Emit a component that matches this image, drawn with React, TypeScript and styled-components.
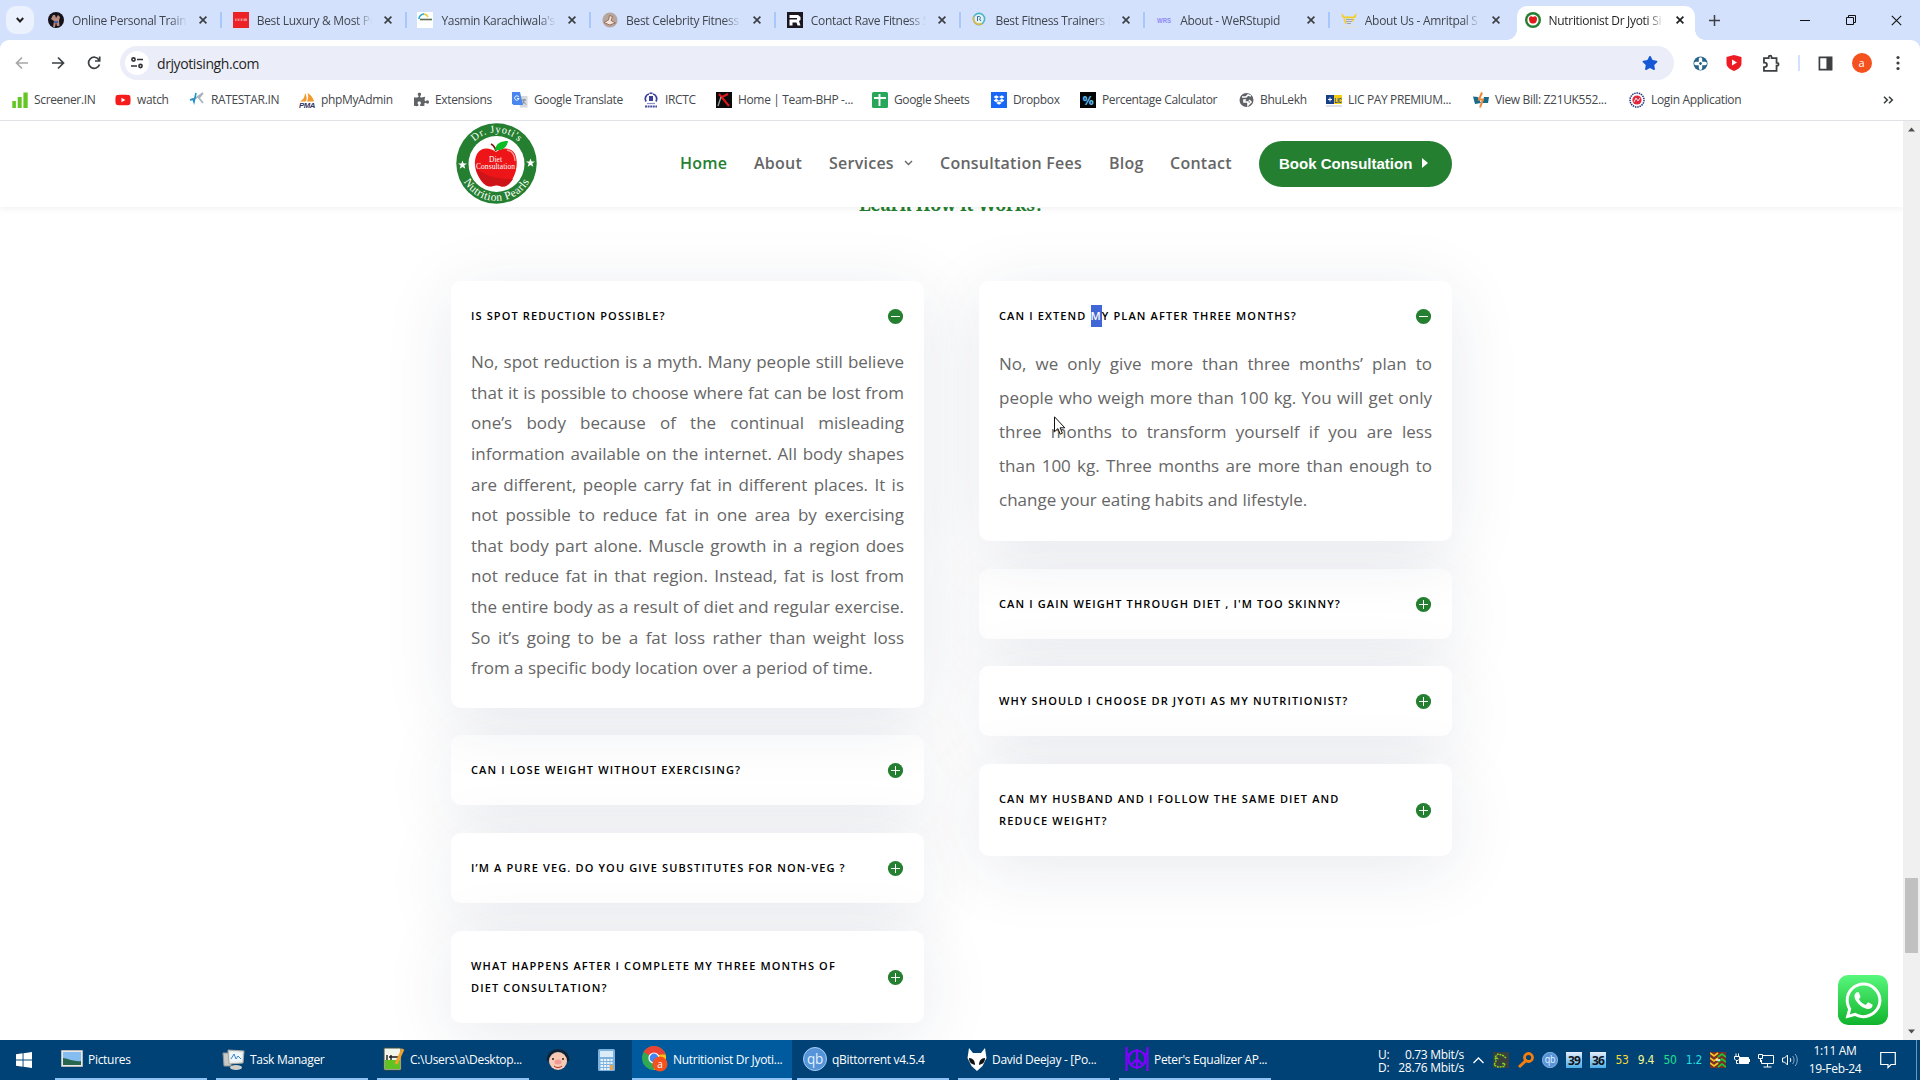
import React from "react";
import styled, { createGlobalStyle, css } from "styled-components";
import { FaWhatsapp, FaPuzzlePiece, FaStar, FaYoutube, FaDropbox } from "react-icons/fa";

const GREEN = "#257f30";
const UI = `"Segoe UI", "Open Sans", "Noto Sans", sans-serif`;

const Global = createGlobalStyle`
  * { box-sizing: border-box; }
  html, body { margin: 0; padding: 0; overflow: hidden; background: #fff; }
  svg { display: block; flex: none; }
`;

const Screen = styled.div`
  width: 1920px;
  height: 1080px;
  display: flex;
  flex-direction: column;
  overflow: hidden;
  font-family: ${UI};
`;

/* ---------- tab strip ---------- */
const TabStrip = styled.div`
  height: 40px;
  flex: none;
  display: flex;
  align-items: center;
  background: #d3e1fd;
  padding-left: 6px;
`;
const TabSearch = styled.div`
  width: 28px;
  height: 28px;
  border-radius: 10px;
  background: #ebf2fe;
  display: flex;
  align-items: center;
  justify-content: center;
  margin-right: 3px;
`;
const Tab = styled.div<{ $active?: boolean }>`
  width: ${(p) => (p.$active ? 178 : 184.7)}px;
  height: ${(p) => (p.$active ? 34 : 28)}px;
  align-self: ${(p) => (p.$active ? "flex-end" : "center")};
  display: flex;
  align-items: center;
  flex: none;
  color: ${(p) => (p.$active ? "#1f1f1f" : "#41464c")};
  ${(p) =>
    p.$active
      ? css`
          position: relative;
          margin-left: 2px;
          background: #fff;
          border-radius: 10px 10px 0 0;
          padding: 0 9px 6px 8px;
          &::before,
          &::after {
            content: "";
            position: absolute;
            bottom: 0;
            width: 10px;
            height: 10px;
          }
          &::before {
            left: -10px;
            background: radial-gradient(circle at 0 0, transparent 9.5px, #fff 10px);
          }
          &::after {
            right: -10px;
            background: radial-gradient(circle at 100% 0, transparent 9.5px, #fff 10px);
          }
        `
      : css`
          padding: 0 0 0 11px;
        `}
`;
const TabTitle = styled.span`
  width: 115px;
  flex: none;
  margin: 2px 12px 0 8px;
  font-size: 12px;
  line-height: 16px;
  letter-spacing: -0.3px;
  white-space: nowrap;
  overflow: hidden;
  -webkit-mask-image: linear-gradient(90deg, #000 98px, transparent 115px);
  mask-image: linear-gradient(90deg, #000 98px, transparent 115px);
`;
const TabSep = styled.span`
  width: 2px;
  flex: none;
  height: 16px;
  background: #a8c7fa;
  margin-left: 13px;
`;
const NewTab = styled.div`
  margin-left: 14px;
  flex: 1;
`;
const WinButtons = styled.div`
  display: flex;
  align-items: center;
  gap: 34px;
  padding-right: 18px;
`;
const ToolbarWrap = styled.div`
  background: #d3e1fd;
  flex: none;
`;

/* ---------- toolbar ---------- */
const Toolbar = styled.div`
  height: 46px;
  background: #fff;
  border-radius: 9px 9px 0 0;
  display: flex;
  align-items: center;
  padding: 0 14px 0 13px;
`;
const NavButtons = styled.div`
  display: flex;
  gap: 18px;
  width: 107px;
`;
const Omnibox = styled.div`
  width: 1554px;
  height: 34px;
  border-radius: 17px;
  background: #ebeef8;
  display: flex;
  align-items: center;
  padding: 0 16px 0 5px;
  color: #1f1f1f;
  font-size: 14px;
  letter-spacing: -0.4px;
`;
const SiteChip = styled.span`
  width: 24px;
  height: 24px;
  border-radius: 50%;
  background: #fff;
  display: flex;
  align-items: center;
  justify-content: center;
  margin-right: 8px;
`;
const Url = styled.span`
  flex: 1;
`;
const ToolIcons = styled.div`
  flex: 1;
  display: flex;
  align-items: center;
  justify-content: space-between;
  padding-left: 19px;
`;
const ToolSep = styled.span`
  width: 2px;
  height: 16px;
  background: #d3e1fd;
`;
const Avatar = styled.span`
  width: 20px;
  height: 20px;
  border-radius: 50%;
  background: #f4511e;
  color: #fff;
  font-size: 11px;
  line-height: 19px;
  text-align: center;
`;

/* ---------- bookmarks ---------- */
const Bookmarks = styled.div`
  height: 35px;
  flex: none;
  display: flex;
  align-items: center;
  padding: 0 26px 7px 12px;
  background: #fff;
  border-bottom: 1px solid #dfe1e5;
`;
const Bookmark = styled.div<{ $w: number }>`
  width: ${(p) => p.$w}px;
  flex: none;
  display: flex;
  align-items: center;
  gap: 6px;
  font-size: 12px;
  line-height: 16px;
  letter-spacing: -0.35px;
  color: #45484c;
  white-space: nowrap;
`;
const More = styled.span`
  margin-left: auto;
`;

/* ---------- site ---------- */
const Viewport = styled.div`
  flex: 1;
  min-height: 0;
  display: flex;
`;
const Page = styled.div`
  width: 1903px;
  overflow: hidden;
  background: #fff;
  position: relative;
`;
const Header = styled.header`
  position: relative;
  z-index: 5;
  height: 86px;
  background: #fff;
  box-shadow: 0 2px 6px rgba(0, 0, 0, 0.06);
  display: flex;
  align-items: center;
  padding: 0 451px 0 456px;
`;
const Nav = styled.nav`
  display: flex;
  align-items: center;
  margin-left: auto;
  gap: 27px;
`;
const NavLink = styled.a<{ $active?: boolean; $w: number }>`
  width: ${(p) => p.$w}px;
  display: flex;
  align-items: center;
  justify-content: space-between;
  white-space: nowrap;
  padding-bottom: 2px;
  font: 600 16px/22px "Open Sans", sans-serif;
  letter-spacing: 0.25px;
  color: ${(p) => (p.$active ? GREEN : "#666")};
`;
const Book = styled.button`
  width: 193px;
  height: 46px;
  border: 0;
  border-radius: 23px;
  background: ${GREEN};
  color: #fff;
  font: bold 15px "Liberation Sans", Arial, sans-serif;
  display: flex;
  align-items: center;
  justify-content: space-between;
  padding: 0 24px 2px 20px;
  white-space: nowrap;
`;
const Heading = styled.h3`
  margin: -18px 0 0;
  height: 30px;
  font: 700 18px/30px "Noto Serif", "DejaVu Serif", serif;
  letter-spacing: -0.35px;
  color: ${GREEN};
  text-align: center;
`;
const Columns = styled.main`
  display: grid;
  grid-template-columns: 473px 473px;
  justify-content: center;
  column-gap: 55px;
  padding-top: 62.3px;
  align-items: start;
`;
const Column = styled.div`
  display: flex;
  flex-direction: column;
  gap: 27.6px;
`;
const Card = styled.section<{ $open?: boolean }>`
  position: relative;
  z-index: ${(p) => (p.$open ? 2 : 1)};
  background: #fff;
  border-radius: 10px;
  padding: 24px 20px;
  box-shadow: 0 12px 70px rgba(28, 45, 84, 0.1);
`;
const Question = styled.div`
  display: flex;
  align-items: center;
  justify-content: space-between;
`;
const QText = styled.h5`
  margin: 0;
  max-width: 385px;
  font: 600 11px/22px "Open Sans", sans-serif;
  letter-spacing: 1.13px;
  color: #000;
  text-transform: uppercase;
`;
const Mark = styled.span`
  background: #4166d5;
  color: #fff;
  padding: 3px 0 4px;
`;
const Answer = styled.p<{ $lh: number }>`
  margin: 20px 0 0;
  font: 400 17px/${(p) => p.$lh}px "Open Sans", sans-serif;
  color: #666;
  text-align: justify;
`;
const ToggleSvg = styled.svg`
  overflow: visible;
`;
const Scrollbar = styled.div`
  width: 17px;
  background: #f0f0f0;
  display: flex;
  flex-direction: column;
  align-items: center;
  padding: 5px 0;
`;
const Thumb = styled.div`
  width: 13px;
  height: 75px;
  background: #c1c1c1;
  margin: 746px 0 auto;
`;
const Whats = styled.div`
  position: absolute;
  right: 15px;
  bottom: 15px;
  width: 50px;
  height: 50px;
  border-radius: 10px;
  background: linear-gradient(#57f87c, #12b32c);
  display: flex;
  align-items: center;
  justify-content: center;
  z-index: 6;
`;
const Pointer = styled.div`
  position: absolute;
  left: 1054px;
  top: 295px;
  z-index: 7;
`;

/* ---------- taskbar ---------- */
const Taskbar = styled.footer`
  height: 40px;
  flex: none;
  background: #004275;
  display: flex;
  color: #fff;
  font-size: 12px;
  letter-spacing: -0.3px;
`;
const Start = styled.div`
  width: 48px;
  display: flex;
  align-items: center;
  justify-content: center;
`;
const Task = styled.div<{ $w?: number; $active?: boolean; $gap: number; $pad?: number }>`
  width: ${(p) => p.$w ?? 152}px;
  margin-left: ${(p) => p.$gap}px;
  padding-left: ${(p) => p.$pad ?? 6}px;
  flex: none;
  display: flex;
  align-items: center;
  gap: 5px;
  white-space: nowrap;
  background: ${(p) => (p.$active ? "#005a9e" : "transparent")};
  border-bottom: 2px solid #8fc3f5;
`;
const Pinned = styled.div<{ $w: number }>`
  width: ${(p) => p.$w}px;
  display: flex;
  align-items: center;
  justify-content: center;
`;
const Tray = styled.div`
  margin-left: auto;
  display: flex;
  align-items: center;
  padding-right: 3px;
`;
const Net = styled.div`
  display: grid;
  grid-template-columns: 16px 70px;
  line-height: 13px;
  margin-right: 9px;
  margin-top: 1px;
  text-align: left;
`;
const Right = styled.span`
  text-align: right;
`;
const TrayCell = styled.span<{ $c?: string; $w?: number }>`
  width: ${(p) => p.$w ?? 24}px;
  display: flex;
  justify-content: center;
  font: 12px "DejaVu Sans Condensed", "DejaVu Sans", sans-serif;
  letter-spacing: -0.3px;
  color: ${(p) => p.$c ?? "#fff"};
`;
const TempBox = styled.span`
  width: 16px;
  height: 16px;
  background: linear-gradient(#e4ecfb, #49aee6);
  color: #10141c;
  font: bold 12px/17px "Open Sans", sans-serif;
  letter-spacing: -0.8px;
  text-align: center;
`;
const Clock = styled.div`
  width: 60px;
  margin-left: -1px;
  line-height: 18px;
  text-align: center;
`;
const Notify = styled.span`
  margin-left: 15px;
`;
const Desk = styled.span`
  width: 1px;
  height: 40px;
  background: #6f95b4;
  margin-left: 20px;
`;

/* ---------- icons ---------- */
const I = ({ s = 16, children }: { s?: number; children: React.ReactNode }) => (
  <svg width={s} height={s} viewBox="0 0 16 16">{children}</svg>
);
const Cross = ({ s = 8, w = 1.7, c = "#3c4043" }) => (
  <svg width={s} height={s} viewBox="0 0 8 8"><path d="M.6.6 7.4 7.4M7.4.6.6 7.4" stroke={c} strokeWidth={w} /></svg>
);

const apple = "M8 5C6 3.6 3.8 4.6 4 7.4 4.2 10 6 12 8 11.4 10 12 11.8 10 12 7.4 12.2 4.6 10 3.6 8 5Z";

const favs: Record<string, React.ReactNode> = {
  trainer: <I><circle cx="8" cy="8" r="8" fill="#15131a" /><path d="M5 3h2l1 3 2-3 2 2-1 4 .5 5H9L8 10l-1 5H5l1-6-3-2z" fill="#b98a7e" /><path d="M6 9h4v2H6z" fill="#4b62a0" /></I>,
  luxury: <I><path d="M0 0h16v16H0z" fill="#ec2227" /><path d="M2 6.500h12v2.500H2z" fill="#f28a8c" /><path d="M4 6v3M7 6v3M10 6v3" stroke="#ec2227" /></I>,
  yasmin: <I><path d="M0 0h16v16H0z" fill="#fff" /><path d="M2 7a5 5 0 0 1 5-5" stroke="#22a7c9" strokeWidth="1.6" fill="none" /><path d="M7 2a5 5 0 0 1 4 3" stroke="#e0cf2e" strokeWidth="1.6" fill="none" /><path d="M3 7.5h12" stroke="#5a6b56" strokeWidth="1.6" /></I>,
  celeb: <I><circle cx="8" cy="8" r="7.6" fill="#b7a69e" /><path d="M2 10.500l4.500-2.500 1-4.500 3 1-1.500 4 4.500 2.500-6 2z" fill="#f1e4dc" stroke="#94644f" strokeWidth=".9" /></I>,
  rave: <I><path d="M0 0h16v16H0z" fill="#1b1720" /><path d="M2.500 3H11l2.500 2v3L12 9l1.500 4.500H10.500L9.500 10.500H5.500v3H2.500V7.500H10V6H2.500z" fill="#fff" /></I>,
  best: <I><circle cx="8" cy="7" r="5.6" fill="#e4f3f0" stroke="#49b6c8" strokeWidth="1.6" /><path d="M3 4.500A5.600 5.600 0 0 0 11 11.500" stroke="#e3b843" strokeWidth="1.6" fill="none" /><path d="M6.500 9V4.500h2a1.300 1.300 0 0 1 0 2.500L10 9" fill="none" stroke="#3768a7" /><path d="M2 15h12" stroke="#d6e4ee" strokeWidth="1.5" /></I>,
  wrs: <svg width="16" height="16" viewBox="0 0 16 16"><text x="1" y="11" fontSize="8" fontWeight="700" fill="#8e8af5" textLength="14" lengthAdjust="spacingAndGlyphs" fontFamily="Liberation Sans">WRS</text></svg>,
  amrit: <I><path d="M.5 1 1 5l3 1.500h8L15 5l.5-4-3 3.500h-9z" fill="#f4ce25" /><path d="M3 6.500h10l-1 5-3 1.500-4-2z" fill="#dfe3e8" /><path d="M5 7.500h7M5 9.500h6M6 11.500h4" stroke="#9aa3b5" /><path d="M3 6.500 5 12M13 6.500l-1.500 3" stroke="#f4ce25" strokeWidth="1.500" /><path d="M1 15h14" stroke="#e6e2c4" /></I>,
  jyoti: <I><circle cx="8" cy="8" r="8" fill={GREEN} /><circle cx="8" cy="8" r="5.600" fill="#fff" /><path d={apple} fill="#e11b1b" /></I>,
};

const tabs: [string, string][] = [
  ["trainer", "Online Personal Trainer"],
  ["luxury", "Best Luxury & Most Pr"],
  ["yasmin", "Yasmin Karachiwala's B"],
  ["celeb", "Best Celebrity Fitness"],
  ["rave", "Contact Rave Fitness S"],
  ["best", "Best Fitness Trainers In"],
  ["wrs", "About - WeRStupid"],
  ["amrit", "About Us - Amritpal S"],
];

const bms: [React.ReactNode, string, number][] = [
  [<I><path d="M.3 9h3.600v7H.3zM5.700 5h4v11h-4zM11.400.5H15.700V16h-4.300z" fill="#62c722" /></I>, "Screener.IN", 103],
  [<FaYoutube size={16} color="#f61c1c" />, "watch", 74],
  [<I><path d="M1 8l6-2 7-5-4 5 4 5" stroke="#a9b3b9" strokeWidth="1.700" fill="none" /><path d="M1 8l3-1 1 3 2-9" stroke="#2490c9" strokeWidth="1.600" fill="none" /></I>, "RATESTAR.IN", 110],
  [<svg width="16" height="16" viewBox="0 0 16 16"><path d="M1 9.500C4 8 6 5 6 1c2 3 2 6 1 8.500zM8 9.500c1.500-3 1.500-6 .5-8.500 4 2 5.500 5 6.500 8.500z" fill="#f39a2d" /><text x="0" y="15.800" fontSize="6.800" fontWeight="700" fontStyle="italic" fill="#32355f" textLength="16" lengthAdjust="spacingAndGlyphs" fontFamily="Liberation Sans">PMA</text></svg>, "phpMyAdmin", 115],
  [<FaPuzzlePiece size={15} color="#5f6368" />, "Extensions", 98],
  [<I><path d="M6 4h9.500v11.500H8z" fill="#d5d8dc" /><path d="M0 0h8l3 13H1.500L0 11.500z" fill="#4a86f0" /><path d="M6.800 5A2.200 2.200 0 1 0 7 6.500H5" stroke="#fff" fill="none" /><path d="M10 8h4M12 7v1c0 2-1 3-1.500 4M11 9.500l3 3" stroke="#6a7480" fill="none" strokeWidth=".8" /></I>, "Google Translate", 131],
  [<I><path d="M3 9.500A5 5 0 0 1 6 2M10 2a5 5 0 0 1 3 7.500" fill="none" stroke="#3a3f9b" strokeWidth="1.800" /><path d="M6 4h4v5H6zM6.500.5h3v1.500h-3z" fill="#3a3f9b" /><path d="M4 11.500h8" stroke="#8b90c8" strokeWidth="1.200" /><path d="M2 14.500h12" stroke="#494e9f" strokeWidth="2" strokeDasharray="2 .6" /></I>, "IRCTC", 73],
  [<I><path d="M0 0h16v16H0z" fill="#0b0b0b" /><path d="M3 2l10 12M6 5l6-3" stroke="#e1181c" strokeWidth="2" /><path d="M5 5L2 14" stroke="#a2a2a2" strokeWidth="1.300" /></I>, "Home | Team-BHP -...", 156],
  [<I><rect width="16" height="16" rx="1.500" fill="#28a659" /><path d="M7.500 2v12M2 6h12" stroke="#fff" strokeWidth="1.900" /></I>, "Google Sheets", 119],
  [<I><path d="M0 0h16v16H0z" fill="#1967f7" /><FaDropbox x={2.5} y={2.5} size={11} color="#fff" /></I>, "Dropbox", 89],
  [<svg width="16" height="16" viewBox="0 0 16 16"><path d="M0 0h16v16H0z" fill="#050505" /><text x="8" y="12.500" fontSize="13" fontWeight="700" textAnchor="middle" fill="#55b9f2" textLength="11" lengthAdjust="spacingAndGlyphs" fontFamily="Open Sans">%</text></svg>, "Percentage Calculator", 159],
  [<svg width="15" height="16" viewBox="0 0 15 16"><circle cx="7.500" cy="8" r="7" fill="#5f6368" /><path d="M3 5h4l2-2 3 1M7 8l-2 0 0 2 4 0 0 3 3-3-2-2" stroke="#fff" strokeWidth="1.600" fill="none" /></svg>, "BhuLekh", 87],
  [<svg width="16" height="16" viewBox="0 0 16 16"><path d="M0 3h8v9H0z" fill="#173f86" /><path d="M8 3h8v9H8z" fill="#f3cd15" /><path d="M2 7.500h4M4 5.500v4" stroke="#fff" /><text x="8.500" y="10.500" fontSize="7" fontWeight="700" fill="#173f86" textLength="7" lengthAdjust="spacingAndGlyphs" fontFamily="Liberation Sans">LIC</text><path d="M0 14h16" stroke="#b8c3d9" /></svg>, "LIC PAY PREMIUM...", 147],
  [<I><path d="M0 4.500l5 .5 3 6-6 1zM9 11l2-6 5 0-1 6z" fill="#176a89" /><path d="M9 .5 6 7.500h4L7 15.500" stroke="#ee8b3b" strokeWidth="2" fill="none" /></I>, "View Bill: Z21UK552...", 156],
  [<I><circle cx="8" cy="8" r="7" fill="none" stroke="#25357e" strokeWidth="1.500" strokeDasharray="1.500 .8" /><circle cx="8" cy="8" r="4.600" fill="#e3263b" /><path d="M5 10l2-4 2 3 2-3" stroke="#fff" fill="none" strokeWidth=".9" /></I>, "Login Application", 120],
];

const STAR = "l1.100 3.100h3.300l-2.600 2 1 3.200-2.800-1.900-2.800 1.900 1-3.200-2.600-2h3.300z";

const LogoSvg = styled.svg`
  margin-top: -1px;
`;

const Logo = () => (
  <LogoSvg width="81" height="81" viewBox="0 0 81 81">
    <circle cx="40.500" cy="40.500" r="40.200" fill={GREEN} />
    <circle cx="40.500" cy="41" r="28" fill="#fff" />
    <path d="M40 29c-6-5-15-5-19 2-4 8-2 18 3 25 4 6 8 9 13 7 2-1 5-1 7 0 5 2 10-2 13-8 4-7 5-17 2-24-4-7-13-7-19-2z" fill="#ed1518" />
    <path d="M20 45c8 8 22 11 37 11-4 6-8 9-13 7-2-1-5-1-7 0-8 2-15-8-17-18z" fill="#cd1418" />
    <path d="M51 27c5 1 8 5 8 11" stroke="#ff9b9b" strokeWidth="1.300" fill="none" />
    <path d="M40 28c-1-4-3-6-5-7" stroke="#7d1a16" strokeWidth="1.800" fill="none" />
    <path d="M39 27c1-7 6-9 13-9-1 6-5 10-13 9z" fill="#0bbd22" />
    <path id="arcTop" d="M9.500 40.500a31 31 0 0 1 62 0" fill="none" />
    <path id="arcBot" d="M3 40.500a37.500 37.500 0 0 0 75 0" fill="none" />
    <g fill="#fff" fontFamily="Liberation Serif, serif">
      <text fontSize="10.500" textAnchor="middle"><textPath href="#arcTop" startOffset="50%" textLength="49">Dr. Jyoti's</textPath></text>
      <text fontSize="11.500" textAnchor="middle"><textPath href="#arcBot" startOffset="50%" textLength="80">Nutrition Pearls</textPath></text>
      <text x="39.500" y="38.500" fontSize="7.500" textAnchor="middle" textLength="13">Diet</text>
      <text x="39.500" y="46" fontSize="7.500" textAnchor="middle" textLength="39">Consultation</text>
    </g>
    <path d={`M6.500 37.500${STAR}`} fill="#fff" />
    <path d={`M74.500 35.500${STAR}`} fill="#fff" />
  </LogoSvg>
);

const Toggle = ({ open }: { open?: boolean }) => (
  <ToggleSvg width="16" height="16" viewBox="0 0 16 16">
    <circle cx="7.500" cy="8.500" r="7.600" fill={GREEN} />
    <path d={open ? "M3 8.500h9" : "M3 8.500h9M7.500 4v9"} stroke="#fff" strokeWidth="1" />
  </ToggleSvg>
);

const Faq = ({ q, a, lh = 30.6 }: { q: React.ReactNode; a?: string; lh?: number }) => (
  <Card $open={!!a}>
    <Question><QText>{q}</QText><Toggle open={!!a} /></Question>
    {a && <Answer $lh={lh}>{a}</Answer>}
  </Card>
);

const QB = ({ s }: { s: number }) => (
  <svg width={s} height={s} viewBox="0 0 24 24"><circle cx="12" cy="12" r="11.500" fill="#5694da" stroke="#a9cdf3" /><text x="12" y="17" textAnchor="middle" fontSize="15" fill="#e4f1fd" fontFamily="Open Sans" textLength="16" lengthAdjust="spacingAndGlyphs">qb</text></svg>
);

export default function App() {
  return (
    <Screen>
      <Global />
      <TabStrip>
        <TabSearch><svg width="8" height="6" viewBox="0 0 8 6"><path d="M.8 1 4 4.500 7.200 1" stroke="#1f1f1f" strokeWidth="1.900" fill="none" /></svg></TabSearch>
        {tabs.map(([k, t], i) => (
          <Tab key={k}>{favs[k]}<TabTitle>{t}</TabTitle><Cross />{i < tabs.length - 1 && <TabSep />}</Tab>
        ))}
        <Tab $active>{favs.jyoti}<TabTitle>Nutritionist Dr Jyoti Si</TabTitle><Cross c="#1f1f1f" /></Tab>
        <NewTab><svg width="11" height="11" viewBox="0 0 11 11"><path d="M5.500 0v11M0 5.500h11" stroke="#3c4043" strokeWidth="1.500" /></svg></NewTab>
        <WinButtons>
          <svg width="12" height="12" viewBox="0 0 12 12"><path d="M1 6.500h10" stroke="#111" /></svg>
          <svg width="12" height="12" viewBox="0 0 12 12"><path d="M1.500 3.500h7v7h-7zM3.500 3.500v-2h7v7h-2" stroke="#111" fill="none" /></svg>
          <Cross s={11} w={0.8} c="#111" />
        </WinButtons>
      </TabStrip>
      <ToolbarWrap>
        <Toolbar>
          <NavButtons>
            <svg width="18" height="18" viewBox="0 0 18 18"><path d="M15 9H4M9 3.500 3.500 9 9 14.500" stroke="#a5a7a9" strokeWidth="1.700" fill="none" /></svg>
            <svg width="18" height="18" viewBox="0 0 18 18"><path d="M3 9h11M9 3.500 14.500 9 9 14.500" stroke="#3c4043" strokeWidth="1.700" fill="none" /></svg>
            <svg width="18" height="18" viewBox="0 0 18 18"><path d="M14 6A5.600 5.600 0 1 0 14.500 10.500M14.700 2.500V7H10" stroke="#3c4043" strokeWidth="1.700" fill="none" /></svg>
          </NavButtons>
          <Omnibox>
            <SiteChip><svg width="14" height="14" viewBox="0 0 14 14"><g fill="none" stroke="#303134" strokeWidth="1.600"><circle cx="3.500" cy="3.500" r="1.600" /><circle cx="10.500" cy="10" r="1.600" /><path d="M7 3.500h6M1 10h6" /></g></svg></SiteChip>
            <Url>drjyotisingh.com</Url>
            <FaStar size={16} color="#1558d6" />
          </Omnibox>
          <ToolIcons>
            <I s={15}><circle cx="8" cy="8" r="7.500" fill="#25658a" /><path d="M8 3v10M3 8h10" stroke="#fff" strokeWidth="3.600" strokeLinecap="round" /><path d="M8 6.500v3M6.500 8h3" stroke="#25658a" strokeWidth="1.400" /></I>
            <I s={16}><path d="M8 0l7.500 2v6c0 4-3 6-7.500 8C3.500 14 .5 12 .5 8V2z" fill="#ed1c24" /><path d="M6 4.500l5 3-5 3z" fill="#fff" /></I>
            <I s={19}><path d="M2.500 3.500h4V2.600a1.200 1.200 0 0 1 2.400 0v.9h4.200V7.500h.5a1.200 1.200 0 0 1 0 2.400h-.5v4.300H2.500V11h.6a1.900 1.900 0 0 0 0-3.800h-.6z" fill="none" stroke="#3c4043" strokeWidth="1.500" /></I>
            <ToolSep />
            <I s={15}><path d="M1.500 1.500h13v13h-13z" fill="none" stroke="#3c4043" strokeWidth="1.800" /><path d="M9 1h6v14H9z" fill="#3c4043" /></I>
            <Avatar>a</Avatar>
            <I s={16}><g fill="#3c4043"><circle cx="8" cy="2.500" r="1.600" /><circle cx="8" cy="8" r="1.600" /><circle cx="8" cy="13.500" r="1.600" /></g></I>
          </ToolIcons>
        </Toolbar>
      </ToolbarWrap>
      <Bookmarks>
        {bms.map(([ic, t, w]) => <Bookmark key={t} $w={w}>{ic}<span>{t}</span></Bookmark>)}
        <More><svg width="11" height="8" viewBox="0 0 11 8"><path d="M1 .7 4.300 4 1 7.300M6 .7 9.300 4 6 7.300" stroke="#3c4043" strokeWidth="1.600" fill="none" /></svg></More>
      </Bookmarks>
      <Viewport>
        <Page>
          <Header>
            <Logo />
            <Nav>
              <NavLink $w={47} $active>Home</NavLink>
              <NavLink $w={48}>About</NavLink>
              <NavLink $w={84}>Services<svg width="9" height="6" viewBox="0 0 9 6"><path d="M1 1l3.500 3.500L8 1" stroke="#666" strokeWidth="1.400" fill="none" /></svg></NavLink>
              <NavLink $w={142}>Consultation Fees</NavLink>
              <NavLink $w={34}>Blog</NavLink>
              <NavLink $w={62}>Contact</NavLink>
              <Book>Book Consultation<svg width="6" height="10" viewBox="0 0 6 10"><path d="M0 0l6 5-6 5z" fill="#fff" /></svg></Book>
            </Nav>
          </Header>
          <Heading>Learn How it Works?</Heading>
          <Columns>
            <Column>
              <Faq q="Is spot reduction possible?" a="No, spot reduction is a myth. Many people still believe that it is possible to choose where fat can be lost from one’s body because of the continual misleading information available on the internet. All body shapes are different, people carry fat in different places. It is not possible to reduce fat in one area by exercising that body part alone. Muscle growth in a region does not reduce fat in that region. Instead, fat is lost from the entire body as a result of diet and regular exercise. So it’s going to be a fat loss rather than weight loss from a specific body location over a period of time." />
              <Faq q="Can I lose weight without exercising?" />
              <Faq q="I’m a pure veg. Do you give substitutes for non-veg ?" />
              <Faq q="What happens after I complete my three months of diet consultation?" />
            </Column>
            <Column>
              <Faq lh={34} q={<>Can I extend <Mark>m</Mark>y plan after three months?</>} a="No, we only give more than three months’ plan to people who weigh more than 100 kg. You will get only three months to transform yourself if you are less than 100 kg. Three months are more than enough to change your eating habits and lifestyle." />
              <Faq q="Can I gain weight through diet , I'm too skinny?" />
              <Faq q="Why should I choose Dr Jyoti as my nutritionist?" />
              <Faq q="Can my husband and I follow the same diet and reduce weight?" />
            </Column>
          </Columns>
          <Whats><FaWhatsapp size={41} color="#fff" /></Whats>
          <Pointer><svg width="12" height="20" viewBox="0 0 12 20"><path d="M.5.8v15l3.400-3.200 2.300 5.600 2.200-1-2.300-5.400h4.700z" fill="#fff" stroke="#111" /></svg></Pointer>
        </Page>
        <Scrollbar>
          <svg width="7" height="6" viewBox="0 0 7 6"><path d="M0 5.500 3.500 1.500 7 5.500z" fill="#505050" /></svg>
          <Thumb />
          <svg width="7" height="6" viewBox="0 0 7 6"><path d="M0 .5h7L3.500 4.500z" fill="#505050" /></svg>
        </Scrollbar>
      </Viewport>
      <Taskbar>
        <Start><I><path d="M0 2.200 6.600 1.300V7.600H0zM7.500 1.200 16 0v7.600H7.500zM0 8.400h6.600v6.300L0 13.800zM7.500 8.400H16V16l-8.500-1.200z" fill="#fff" /></I></Start>
        <Task $gap={7}>
          <svg width="22" height="18" viewBox="0 0 22 18"><path d="M.5.500h21v16H.5z" fill="#e9e9e9" stroke="#b9b9b9" /><path d="M2 2h18v13H2z" fill="#86bdf0" /><path d="M2 8c6 1 12 4 18 3v4H2z" fill="#28664e" /></svg>Pictures
        </Task>
        <Task $gap={9}>
          <svg width="23" height="23" viewBox="0 0 23 23"><path d="M1 5h8v13H2z" fill="#c9c9c5" stroke="#8f9496" /><path d="M6 2l16 1-1 12-14 1z" fill="#e9e9e4" stroke="#a5a8a8" /><path d="M8 4l12 .7-.8 8.600L9 14z" fill="#eef7ff" /><path d="M9 11l3-5 2 5 2-3 3 3" stroke="#3c84c4" fill="none" /><ellipse cx="14" cy="19.500" rx="6" ry="2.500" fill="#cfcfca" /></svg>Task Manager
        </Task>
        <Task $gap={9}>
          <svg width="22" height="24" viewBox="0 0 22 24"><path d="M1 1h17v22H1z" fill="#f3f6ea" stroke="#3d4a3a" /><path d="M2 13h15v9H2z" fill="#5fc321" /><path d="M4 8v5M8 8v5M6 10h9" stroke="#1b1b1b" strokeWidth="1.400" /><path d="M20 2 13 17" stroke="#f0a22c" strokeWidth="3" /></svg>C:\Users\a\Desktop...
        </Task>
        <Pinned $w={58}><svg width="24" height="24" viewBox="0 0 24 24"><path d="M2 13C1-1 23-1 22 13" fill="none" stroke="#15202e" strokeWidth="2.500" /><circle cx="12" cy="13" r="9" fill="#f9c9b4" /><path d="M7 10v2M17 10v2" stroke="#222" strokeWidth="1.500" /><ellipse cx="12" cy="14" rx="3.500" ry="2.500" fill="#ef9a96" /><path d="M8 18c2 2 6 2 8 0" stroke="#a33" fill="none" /></svg></Pinned>
        <Pinned $w={39}><svg width="17" height="22" viewBox="0 0 17 22"><rect width="17" height="22" rx="1.500" fill="#7eb2de" /><path d="M2 2h13v6H2z" fill="#d9ecf7" /><path d="M2.500 11h12M2.500 14h12M2.500 17h12M2.500 20h12" stroke="#e8f3fb" strokeWidth="2" strokeDasharray="2.500 .8" /><path d="M12 16h3v5h-3z" fill="#f0a24a" /></svg></Pinned>
        <Task $active $w={160} $gap={6} $pad={10}>
          <svg width="26" height="26" viewBox="0 0 26 26"><circle cx="12" cy="12" r="12" fill="#31a853" /><path d="M12 12 1.600 6A12 12 0 0 1 22.400 6z" fill="#ea4335" /><path d="M12 12 22.400 6A12 12 0 0 1 12 24z" fill="#fbc116" /><path d="M2 5.500h20.400l1 3H12z" fill="#ea4335" /><circle cx="12" cy="12" r="5.600" fill="#fff" /><circle cx="12" cy="12" r="4.400" fill="#4285f4" /><circle cx="18" cy="18" r="7.500" fill="#f4511e" /><text x="18" y="21.500" fill="#fff" fontSize="10" textAnchor="middle">a</text></svg><span>Nutritionist Dr Jyoti...</span>
        </Task>
        <Task $gap={5}><QB s={24} />qBittorrent v4.5.4</Task>
        <Task $gap={9} $pad={9}>
          <svg width="20" height="23" viewBox="0 0 20 23"><path d="M2 0l4 5h8l4-5 1.500 10-4 8L10 23l-5.500-5-4-8z" fill="#fff" /><path d="M2 10c4 0 6 3 6 7-4-1-6-3-6-7zM18 10c-4 0-6 3-6 7 4-1 6-3 6-7z" fill="#111" /></svg>David Deejay - [Po...
        </Task>
        <Task $gap={9}>
          <svg width="24" height="24" viewBox="0 0 24 24"><g fill="none" stroke="#8000ff" strokeWidth="2.200"><circle cx="12" cy="12" r="8.500" /><path d="M12 2v20M12 12l-6 6M12 12l6 6M1.500 0v24M22.500 0v24M1 5l4 4M23 5l-4 4" /></g></svg>Peter's Equalizer AP...
        </Task>
        <Tray>
          <Net><span>U:</span><Right>0.73 Mbit/s</Right><span>D:</span><Right>28.76 Mbit/s</Right></Net>
          <TrayCell $w={11}><svg width="11" height="7" viewBox="0 0 11 7"><path d="M.5 6 5.500 1l5 5" stroke="#fff" strokeWidth="1.300" fill="none" /></svg></TrayCell>
          <TrayCell $w={34}><I><path d="M0 0h16v16H0z" fill="#3b3f3c" /><path d="M13 6 10 3.500 5 2 2 5l1 4-2 4 4 2 6-.5 1-3H9M3 6l3 1" stroke="#7fdd24" strokeWidth="1.400" strokeDasharray="2 .8" fill="none" /></I></TrayCell>
          <TrayCell $w={16}><I><circle cx="10.500" cy="5.500" r="4" fill="none" stroke="#f57f0e" strokeWidth="2.800" /><path d="M7.500 9 1 15" stroke="#f57f0e" strokeWidth="3" /></I></TrayCell>
          <TrayCell $w={32}><QB s={16} /></TrayCell>
          <TrayCell $w={16}><TempBox>39</TempBox></TrayCell>
          <TrayCell $w={32}><TempBox>36</TempBox></TrayCell>
          <TrayCell $w={16} $c="#f5d938">53</TrayCell>
          <TrayCell $w={32} $c="#f3f58e">9.4</TrayCell>
          <TrayCell $w={16} $c="#22e08f">50</TrayCell>
          <TrayCell $w={32} $c="#22dfe0">1.2</TrayCell>
          <TrayCell $w={16}><I><path d="M0 0h16v16H0z" fill="#7a2d24" /><path d="M0 1l4 3 4-3M0 6l4 3 4-3M0 11l4 3 4-3" stroke="#f4c62a" strokeWidth="1.700" fill="none" /><path d="M8 5l4-3 4 3M8 10l4-3 4 3M8 15l4-3 4 3" stroke="#1fc63b" strokeWidth="1.700" fill="none" /><path d="M6 8h4" stroke="#fff" strokeWidth="1.500" /></I></TrayCell>
          <TrayCell $w={32}><I><path d="M5.500 5.500h9v6h-9z" fill="#fff" stroke="#fff" /><path d="M15.500 7v3M2 1.500v3M4.500 1.500v3M.5 4.500h5v2.500l-1.500 1.500H2L.5 7zM2.500 8.500v3h2" stroke="#fff" fill="#004275" /></I></TrayCell>
          <TrayCell $w={16}><I><path d="M4 3.500h11.500v8H3.500V8M9.500 12v3M5.500 15h8M.5 2.500h4v4h-4zM2.500 7v3" stroke="#fff" fill="none" /></I></TrayCell>
          <TrayCell $w={32}><I><path d="M.5 6h2l3-3v10l-3-3h-2z" stroke="#fff" fill="none" /><path d="M8 6c1 1 1 3 0 4" stroke="#fff" fill="none" /><path d="M10.500 4c2 2 2 6 0 8M13 2c3 3 3 9 0 12" stroke="#8aa9c4" fill="none" /></I></TrayCell>
          <Clock>1:11 AM<br />19-Feb-24</Clock>
          <Notify><svg width="16" height="18" viewBox="0 0 16 18"><path d="M.7 1.500h14.600v12H11L8 16.500v-3H.7z" stroke="#fff" strokeWidth="1.200" fill="none" /></svg></Notify>
          <Desk />
        </Tray>
      </Taskbar>
    </Screen>
  );
}
